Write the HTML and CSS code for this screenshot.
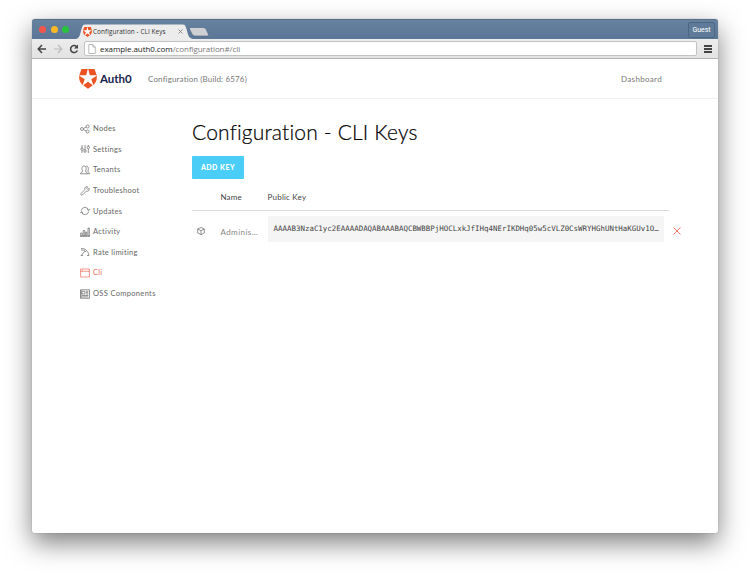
FILE: index.html
```html
<!DOCTYPE html>
<html lang="en">
<head>
<meta charset="utf-8">
<title>Configuration - CLI Keys</title>
<link rel="stylesheet" href="styles.css">
</head>
<body>
<svg width="0" height="0" class="defs">
  <symbol id="shield" viewBox="0 0 18 20">
    <path fill="#eb5424" d="M2.500 0h13l2 5.600c1 4-.1 8.100-3.700 10.700L9 19.800l-4.800-3.500C.6 13.700-.5 9.600.5 5.600z"/>
    <path fill="#fff" d="M8.800 0h.4L10.800 6.300H17.400L17.700 6.700L12.300 10.300L14.300 16L13.900 16.300L9 12.800L4.100 16.300L3.700 16L5.700 10.300L.3 6.700L.6 6.300H7.200z"/>
  </symbol>
</svg>
<div class="window">
  <div class="titlebar">
    <div class="lights"><i class="red"></i><i class="yellow"></i><i class="green"></i></div>
    <div class="tabs">
      <svg class="tabshape" width="142" height="15" viewBox="0 0 142 15">
        <path d="M0 15C4 14 4 10 5.500 5C7 1 7 .5 10 .5H106C109 .5 109 1 110.500 5C112 10 112 14 117 15z" fill="#ececec"/>
        <path d="M114 3.500H127Q129.500 3.500 130 5L132.500 10.500Q133 12 131 12H119Q117 12 116 10L113.500 5Q113 3.500 114 3.500z" fill="#cdcfd2" stroke="#4e6784" stroke-width=".6"/>
      </svg>
      <div class="tab">
        <svg class="favicon" width="9" height="10"><use href="#shield"/></svg>
        <span class="tabtitle">Configuration - CLI Keys</span>
        <svg class="close" width="5" height="5" viewBox="0 0 5 5"><path d="M.5.5l4 4M4.500.5l-4 4" stroke="#777" stroke-width=".8"/></svg>
      </div>
    </div>
    <div class="guest">Guest</div>
  </div>
  <div class="toolbar">
    <svg class="nav" width="46" height="12" viewBox="0 0 46 12" fill="none">
      <path d="M9 6H1.500M5 2L1.200 6L5 10" stroke="#444" stroke-width="1.500"/>
      <path d="M17 6h7.500M21 2l3.800 4L21 10" stroke="#bbb" stroke-width="1.200"/>
      <path d="M39.500 3.500A3.500 3.500 0 1 0 40.300 7.500" stroke="#444" stroke-width="1.500"/>
      <path d="M41 1.500V5.500H37z" fill="#444"/>
    </svg>
    <div class="address">
      <svg width="8" height="10" viewBox="0 0 8 10"><path d="M.8.5H4.800L7.300 3V9.500H.8zM4.800.5V3H7.300" fill="#fff" stroke="#aaa" stroke-width=".8"/></svg>
      <span class="url"><b>example.auth0.com</b>/configuration#/cli</span>
    </div>
    <div class="menu"><i></i><i></i><i></i></div>
  </div>
  <header class="header">
    <svg class="logo" width="18" height="20"><use href="#shield"/></svg>
    <span class="brand">Auth0</span>
    <span class="build">Configuration (Build: 6576)</span>
    <a class="dashboard">Dashboard</a>
  </header>
  <div class="content">
    <nav class="side">
      <a><svg viewBox="0 0 10 10"><circle cx="2" cy="5" r="1.500"/><circle cx="7.600" cy="2.500" r="1.500"/><circle cx="7.600" cy="7.500" r="1.500"/><path d="M3.500 4.500L6.200 3M3.500 5.500L6.200 7"/></svg><span>Nodes</span></a>
      <a><svg viewBox="0 0 10 10"><path d="M2 1v3M2 6.500V9M5 1v5M5 8.500V9M8.300 1v1.500M8.300 5V9"/><circle cx="2" cy="5.200" r="1.200"/><circle cx="5" cy="7" r="1.200"/><circle cx="8.300" cy="3.500" r="1.200"/></svg><span>Settings</span></a>
      <a><svg viewBox="0 0 10 10"><path d="M.5 8.800H7.500C7.500 7 5.500 7.300 5.500 6C6.600 4.500 6.500 1 4 1S1.600 4.500 2.700 6C2.700 7.200.5 7 .5 8.800zM6 1.200C8.500.5 9 4.500 7.700 6C7.700 7.200 9.500 7 9.500 8.800H7.500"/></svg><span>Tenants</span></a>
      <a><svg viewBox="0 0 10 10"><path d="M7.800.9L6.500 2.200L7.800 3.500L9.100 2.200C9.800 4.500 8 5.800 6.200 5.200L2.500 8.900C1.500 9.800.2 8.500 1.100 7.500L4.800 3.800C4.200 2 5.500.2 7.800.9z"/></svg><span>Troubleshoot</span></a>
      <a><svg viewBox="0 0 10 10"><path d="M1.300 4.500A3.700 3.700 0 0 1 8.500 4M8.700 5.500A3.700 3.700 0 0 1 1.500 6M7.100 3.400L8.600 4.600L9.700 3M.3 7L1.500 5.500L3 6.600"/></svg><span>Updates</span></a>
      <a><svg viewBox="0 0 10 10"><path d="M.7 9V6H2.200V9zM3.200 9V3.500H4.700V9zM5.700 9V5H6.800V9zM8 9V1H9.300V9zM0 9.300H10"/></svg><span>Activity</span></a>
      <a><svg viewBox="0 0 10 10"><path d="M1 1.500C5 1 8 4 9 8.500H7M1 3C3 2.700 5 3.500 6 5M1 8.500L4.800 4.200M1 8.500H3"/></svg><span>Rate limiting</span></a>
      <a class="active"><svg viewBox="0 0 10 10"><path d="M.6 1H9.400V9H.6zM.6 3.300H9.400M2 2.200H3"/></svg><span>Cli</span></a>
      <a><svg viewBox="0 0 10 10"><path d="M.5.8H9.500V9.300H.5zM2 2.300H5V5H2zM6 2.300H8.300M6 3.700H8.300M6 5H8.300M2 6.500H8.300M2 7.900H8.300M1.200 1V9"/></svg><span class="wide">OSS Components</span></a>
    </nav>
    <main class="main">
      <h1>Configuration - CLI Keys</h1>
      <button class="add">ADD KEY</button>
      <div class="row head"><span></span><span>Name</span><span>Public Key</span></div>
      <div class="row item">
        <svg class="cube" width="8" height="8" viewBox="0 0 8 8"><path d="M4 .5L7.300 2V6L4 7.600L.7 6V2zM.7 2L4 3.700L7.300 2M4 3.700V7.600"/></svg>
        <span class="name">Adminis…</span>
        <code>AAAAB3NzaC1yc2EAAAADAQABAAABAQCBWBBPjHOCLxkJfIHq4NErIKDHq05w5cVLZ0CsWRYHGhUNtHaKGUv1O…</code>
        <svg class="remove" width="8" height="8" viewBox="0 0 8 8"><path d="M.5.5l7 7M7.500.5l-7 7"/></svg>
      </div>
    </main>
  </div>
</div>
</body>
</html>
```
FILE: styles.css
```css
* { box-sizing: border-box; }
body { margin: 0; padding: 19px 32px 0; height: 579px; overflow: hidden; background: #fff; font-family: Lato, sans-serif; font-variant-ligatures: none; }
.defs { display: block; position: absolute; }
.window { height: 514px; border-radius: 3px 3px 2px 2px; background: #fff; box-shadow: 0 0 1px rgba(0,0,0,.45), 0 10px 26px rgba(0,0,0,.5); }
.titlebar { height: 20px; display: flex; align-items: flex-end; background: linear-gradient(#67829f, #5b7696); border-radius: 3px 3px 0 0; border-top: 1px solid #56708e; }
.lights { display: flex; gap: 5px; width: 45px; padding: 0 0 6px 7px; }
.lights i { width: 7px; height: 7px; border-radius: 50%; flex: none; }
.lights .green { margin-left: -1px; }
.red { background: #f9564f; }
.yellow { background: #fbb925; }
.green { background: #27c33c; }
.tabs { width: 142px; height: 15px; display: grid; margin-left: -1px; }
.tabshape, .tab { grid-area: 1 / 1; }
.tab { display: flex; align-items: center; padding-left: 7px; width: 108px; font: 6.400px/15px "Open Sans", sans-serif; color: #333; white-space: nowrap; }
.favicon { flex: none; margin-right: 1px; }
.tabtitle { width: 85px; letter-spacing: .08px; }
.close { flex: none; }
.guest { margin: 0 3px 1px auto; width: 27px; height: 16px; border: 1px solid #4c6684; border-radius: 2px; color: #fff; font: 7px/14px Roboto, sans-serif; text-align: center; background: #607b99; }
.toolbar { height: 20px; display: flex; align-items: center; background: linear-gradient(#ececec, #e3e3e3); border-bottom: 1px solid #b5b5b5; }
.nav { margin-left: 5px; flex: none; }
.address { margin-left: 1px; width: 613px; height: 15px; border: 1px solid #c2c2c2; border-radius: 2px; background: #fff; display: flex; align-items: center; padding-left: 3px; gap: 4px; }
.url { font: 8px/13px "Open Sans", sans-serif; letter-spacing: -.07px; color: #777; white-space: nowrap; }
.url b { font-weight: 400; color: #222; }
.menu { margin-left: 7px; display: grid; gap: 1px; }
.menu i { width: 8px; height: 2px; background: #444; }
.header { height: 40px; border-bottom: 1px solid #f1f1f1; display: flex; align-items: center; padding-left: 47px; font-size: 8px; color: #777; }
.logo { flex: none; }
.brand { font: 700 11.500px/16px Lato, sans-serif; color: #16214d; margin-left: 3px; width: 48px; }
.build { letter-spacing: .15px; white-space: nowrap; }
.dashboard { margin-left: auto; margin-right: 56px; letter-spacing: .32px; }
.content { display: flex; }
.side { width: 160px; padding: 19.500px 0 0 48px; }
.side a { display: flex; align-items: center; gap: 3px; height: 20.600px; font-size: 7.500px; letter-spacing: .28px; color: #666; white-space: nowrap; }
.side svg { width: 10px; height: 10px; fill: none; stroke: #666; stroke-width: .7; }
.side .active { color: #f0695a; }
.side .active svg { stroke: #f0695a; }
.side .wide { letter-spacing: .33px; }
.main { width: 510px; padding-top: 19px; }
h1 { margin: 0; font-size: 21px; line-height: 28px; font-weight: 300; letter-spacing: .18px; color: #000; -webkit-text-stroke: .2px #000; white-space: nowrap; }
.add { display: block; margin: 10px 0 0; width: 52px; height: 23px; padding: 0; border: 0; border-radius: 1px; background: #4acdf7; color: #fff; font: 900 7px/23px Lato, sans-serif; letter-spacing: .5px; }
.row { display: grid; grid-template-columns: 28.400px 47.200px 396.400px 26px; }
.head { width: 477px; height: 32px; font-size: 8px; line-height: 36px; letter-spacing: .2px; color: #444; border-bottom: 1px solid #d9d9d9; }
.item { margin-top: 5px; height: 26px; align-items: center; }
.cube { margin: 4px 0 0 5px; fill: none; stroke: #666; stroke-width: .7; }
.name { font-size: 8px; letter-spacing: .45px; color: #888; padding-top: 6px; }
code { height: 26px; padding-left: 6px; background: #f5f5f5; border-radius: 1px; font: 7.450px/25px "DejaVu Sans Mono", monospace; color: #444; white-space: nowrap; }
.remove { margin: 4px 0 0 9.500px; fill: none; stroke: #f0695a; stroke-width: .9; }
```
